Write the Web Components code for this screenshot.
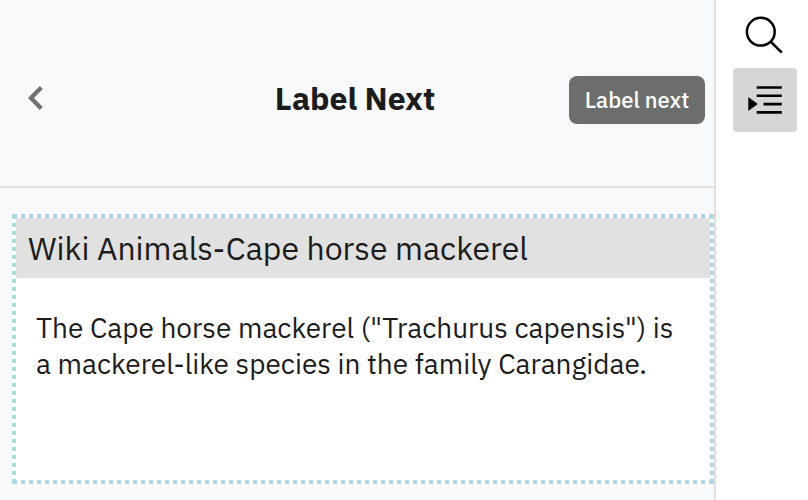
<!DOCTYPE html>
<html lang="en">
<head>
<meta charset="utf-8">
<title>Label Next</title>
<style>
html, body { margin: 0; height: 100%; overflow: hidden; background: #fff; }
body { font-family: "IBM Plex Sans", Roboto, "Noto Sans", sans-serif; color: #1c1c1c; }
</style>
</head>
<body>
<label-app></label-app>
<script>
const define = (name, html) => customElements.define(name, class extends HTMLElement {
  constructor() {
    super();
    this.attachShadow({ mode: 'open' }).innerHTML = html;
  }
});

define('nav-header', `
<style>
:host { display: flex; align-items: center; flex: none; border-bottom: 2px solid #e0e0e0; padding: 10px 9px 0 24px; box-sizing: content-box; height: 176px; }
svg { flex: none; display: block; }
.side { flex: 1 1 0; display: flex; align-items: center; }
.end { justify-content: flex-end; }
h1 { margin: 0 19px 0 0; font-size: 32px; line-height: 40px; font-weight: 700; white-space: nowrap; letter-spacing: -.05px; }
button { font: 500 22px/28px "IBM Plex Sans", Roboto, "Noto Sans", sans-serif; border: 0; border-radius: 8px; background: #6c6e6d; color: #fff; width: 136px; height: 48px; padding: 0; margin-top: 4px; }
</style>
<div class="side"><svg width="24" height="28" viewBox="0 0 24 28" fill="none" stroke="#707070" stroke-width="4.2"><path d="M17.3 3.6 7 14 17.3 24.4"/></svg></div>
<h1><slot name="title"></slot></h1>
<div class="side end"><button><slot name="action"></slot></button></div>
`);

define('note-card', `
<style>
:host {
  --d: #add8e6;
  display: block; margin: 26px 0 0 12px; box-sizing: border-box; height: 270px; padding: 4px;
  background:
    linear-gradient(var(--d), var(--d)) 0 0 / 5px 4px,
    linear-gradient(var(--d), var(--d)) 100% 0 / 5px 4px,
    linear-gradient(var(--d), var(--d)) 0 100% / 5px 4px,
    linear-gradient(var(--d), var(--d)) 100% 100% / 5px 4px,
    linear-gradient(var(--d), var(--d)) 0 0 / 4px 5px,
    linear-gradient(var(--d), var(--d)) 100% 0 / 4px 5px,
    linear-gradient(var(--d), var(--d)) 0 100% / 4px 5px,
    linear-gradient(var(--d), var(--d)) 100% 100% / 4px 5px,
    linear-gradient(90deg, transparent 1px, var(--d) 1px 5px, transparent 5px) 0 0 / 8px 4px,
    linear-gradient(90deg, transparent 1px, var(--d) 1px 5px, transparent 5px) 0 100% / 8px 4px,
    linear-gradient(transparent 1px, var(--d) 1px 5px, transparent 5px) 0 0 / 4px 8px,
    linear-gradient(transparent 1px, var(--d) 1px 5px, transparent 5px) 100% 0 / 4px 8px,
    #fff;
  background-repeat: no-repeat, no-repeat, no-repeat, no-repeat, no-repeat, no-repeat, no-repeat, no-repeat, repeat-x, repeat-x, repeat-y, repeat-y, repeat;
}
header { height: 60px; background: #e1e1e1; padding-left: 12px; font-size: 32px; line-height: 61px; white-space: nowrap; }
.text { padding: 32px 20px 0; font-size: 28px; line-height: 36px; }
</style>
<header><slot name="heading"></slot></header>
<div class="text"><slot></slot></div>
`);

define('text-line', `
<style>:host { display: block; white-space: nowrap; }</style><slot></slot>`);

define('side-rail', `
<style>
:host { display: flex; flex-direction: column; align-items: flex-start; padding: 4px 0 0 17px; box-sizing: border-box; }
.item { width: 64px; height: 64px; border-radius: 4px; }
.active { background: #d6d6d6; }
svg { display: block; }
</style>
<div class="item"><svg width="64" height="64" viewBox="0 0 64 64" fill="none" stroke="#000" stroke-width="2.5"><circle cx="27.8" cy="27.7" r="13.9"/><path d="m37.6 37.5 11.2 11.2"/></svg></div>
<div class="item active"><svg width="64" height="64" viewBox="0 0 64 64"><path d="M15.3 29v14l9.4-7z"/><path fill="none" stroke="#000" stroke-width="2.6" d="M23.7 19.5H48.8M23.7 27.8H48.8M30.5 36.1H48.8M23.7 44.4H48.8"/></svg></div>
`);

define('label-app', `
<style>
:host { display: flex; height: 500px; }
main { width: 714px; flex: none; background: #f8f9fb; border-right: 2px solid #e0e0e0; }
side-rail { flex: 1; }
</style>
<main>
  <nav-header><span slot="title">Label Next</span><span slot="action">Label next</span></nav-header>
  <note-card><span slot="heading">Wiki Animals-Cape horse mackerel</span>
    <text-line>The Cape horse mackerel ("Trachurus capensis") is</text-line>
    <text-line>a mackerel-like species in the family Carangidae.</text-line>
  </note-card>
</main>
<side-rail></side-rail>
`);
</script>
</body>
</html>
